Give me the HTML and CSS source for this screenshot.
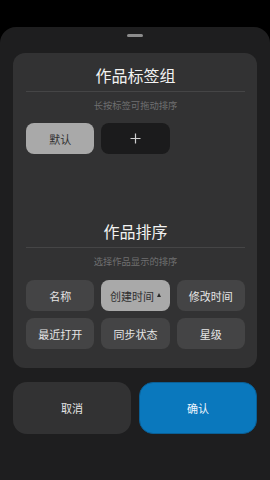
FILE: index.html
```html
<!DOCTYPE html>
<html lang="zh">
<head>
<meta charset="utf-8">
<link rel="stylesheet" href="styles.css">
</head>
<body>
<div class="sheet">
  <div class="handle"></div>
  <div class="card">
    <div class="title">作品标签组</div>
    <div class="divider"></div>
    <div class="subtitle">长按标签可拖动排序</div>
    <div class="tags">
      <div class="btn tag-selected">默认</div>
      <div class="btn tag-add">
        <svg width="11" height="11" viewBox="0 0 11 11"><path d="M5.5 0.5V10.5M0.5 5.5H10.5" stroke="#d0d0d0" stroke-width="1.2" fill="none"/></svg>
      </div>
    </div>
    <div class="title">作品排序</div>
    <div class="divider"></div>
    <div class="subtitle">选择作品显示的排序</div>
    <div class="sort-grid">
      <div class="btn">名称</div>
      <div class="btn selected">创建时间<span class="tri"></span></div>
      <div class="btn">修改时间</div>
      <div class="btn">最近打开</div>
      <div class="btn">同步状态</div>
      <div class="btn">星级</div>
    </div>
  </div>
  <div class="actions">
    <div class="action cancel">取消</div>
    <div class="action confirm">确认</div>
  </div>
</div>
</body>
</html>
```
FILE: styles.css
```css
html, body {
  margin: 0;
  padding: 0;
  background: #000;
  font-family: "Noto Sans CJK SC", "Noto Sans", sans-serif;
}
.sheet {
  margin-top: 27px;
  min-height: 453px;
  box-sizing: border-box;
  background: #1e1e1f;
  border-radius: 16px 16px 0 0;
  padding: 7px 13px 0;
}
.handle {
  width: 16px;
  height: 3px;
  border-radius: 2px;
  background: #8c8c8c;
  margin: 0 auto;
}
.card {
  margin-top: 16px;
  background: #323233;
  border-radius: 12px;
  padding: 10px 12px 19px 13px;
}
.title {
  font-size: 16px;
  line-height: 24px;
  text-align: center;
  color: #f2f2f2;
}
.divider {
  height: 1px;
  background: #454546;
  margin-top: 4px;
}
.subtitle {
  margin-top: 6px;
  font-size: 9.3px;
  line-height: 14px;
  text-align: center;
  color: #6f6f70;
}
.tags {
  margin-top: 11px;
  height: 96px;
  display: grid;
  grid-template-columns: repeat(3, 1fr);
  grid-auto-rows: 31px;
  column-gap: 7px;
  align-content: start;
}
.sort-grid {
  margin-top: 12px;
  display: grid;
  grid-template-columns: repeat(3, 1fr);
  grid-auto-rows: 31px;
  gap: 7px;
}
.btn {
  display: flex;
  align-items: center;
  justify-content: center;
  border-radius: 8px;
  background: #444445;
  color: #e6e6e6;
  font-size: 11px;
}
.tag-selected, .selected {
  background: #a9a9a9;
  color: #303030;
}
.tag-add {
  background: #1b1b1c;
}
.tri {
  display: inline-block;
  width: 0;
  height: 0;
  border-left: 2.5px solid transparent;
  border-right: 2.5px solid transparent;
  border-bottom: 4px solid #2a2a2a;
  margin-left: 3px;
  margin-bottom: 2px;
}
.actions {
  margin-top: 14px;
  display: grid;
  grid-template-columns: 1fr 1fr;
  gap: 8px;
}
.action {
  height: 52px;
  border-radius: 14px;
  display: flex;
  align-items: center;
  justify-content: center;
  font-size: 11px;
  box-sizing: border-box;
}
.cancel {
  background: #323233;
  color: #e6e6e6;
}
.confirm {
  background: #0a78bd;
  border: 1px solid #0a5f95;
  color: #eef6ff;
}
```
